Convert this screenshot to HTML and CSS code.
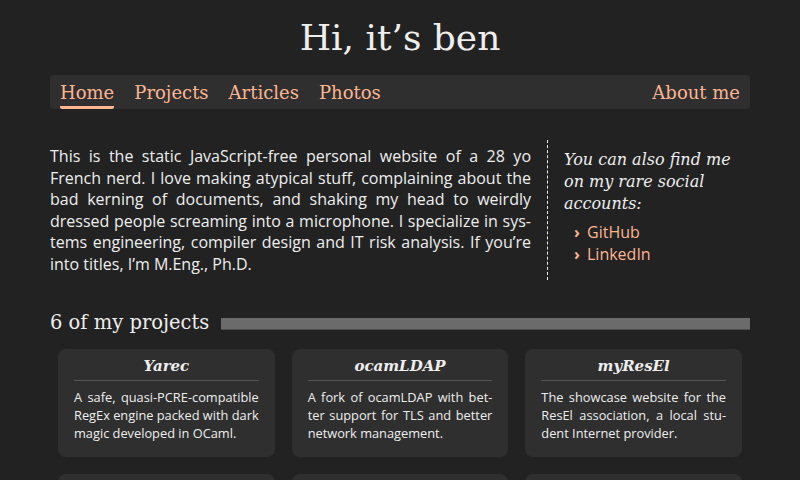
FILE: index.html
```html
<!DOCTYPE html>
<html lang="en">
<head>
  <meta charset="UTF-8">
  <meta name="viewport" content="width=device-width, initial-scale=1.0">
  <title>Hi, it’s ben</title>
  <link rel="stylesheet" href="styles.css">
</head>
<body>
  <div class="page">
    <h1 class="title">Hi, it’s ben</h1>

    <nav class="nav">
      <ul class="nav__list">
        <li><a href="#" class="nav__link nav__link--active">Home</a></li>
        <li><a href="#" class="nav__link">Projects</a></li>
        <li><a href="#" class="nav__link">Articles</a></li>
        <li><a href="#" class="nav__link">Photos</a></li>
      </ul>
      <a href="#" class="nav__link">About me</a>
    </nav>

    <div class="intro">
      <p class="intro__text">This is the static JavaScript-free personal website of a 28&nbsp;yo French nerd. I love making atypical stuff, complaining about the bad kerning of documents, and shaking my head to weirdly dressed people screaming into a microphone. I specialize in sys&shy;tems engineering, compiler design and IT risk analysis. If you’re into titles, I’m M.Eng., Ph.D.</p>
      <aside class="social">
        <p class="social__text">You can also find me on my rare social accounts:</p>
        <ul class="social__list">
          <li><a href="#">GitHub</a></li>
          <li><a href="#">LinkedIn</a></li>
        </ul>
      </aside>
    </div>

    <h2 class="section-title"><span>6 of my projects</span></h2>

    <div class="projects">
      <div class="card">
        <h3 class="card__title">Yarec</h3>
        <p class="card__text">A safe, quasi-PCRE-compatible RegEx engine packed with dark magic developed in OCaml.</p>
      </div>
      <div class="card">
        <h3 class="card__title">ocamLDAP</h3>
        <p class="card__text">A fork of ocamLDAP with bet&shy;ter support for TLS and better network management.</p>
      </div>
      <div class="card">
        <h3 class="card__title">myResEl</h3>
        <p class="card__text">The showcase website for the ResEl association, a local stu&shy;dent Internet provider.</p>
      </div>
      <div class="card">
        <h3 class="card__title">Tadoku</h3>
        <p class="card__text">A small tool to help reading Japanese texts.</p>
      </div>
      <div class="card">
        <h3 class="card__title">Blog</h3>
        <p class="card__text">This very website.</p>
      </div>
      <div class="card">
        <h3 class="card__title">Misc</h3>
        <p class="card__text">Various small things.</p>
      </div>
    </div>
  </div>
</body>
</html>
```

FILE: styles.css
```css
* {
  box-sizing: border-box;
}

body, html {
  margin: 0;
  padding: 0;
}

body {
  background: #222;
  color: #eee;
  font-family: "Open Sans", sans-serif;
}

a {
  color: #fdb592;
  text-decoration: none;
}

.page {
  width: 700px;
  margin: 0 auto;
}

.title {
  margin: 0;
  padding: 14px 0 13px;
  font-family: "DejaVu Serif", serif;
  font-weight: normal;
  font-size: 36px;
  line-height: 48px;
  text-align: center;
  color: #eee;
}

.nav {
  display: flex;
  justify-content: space-between;
  align-items: center;
  height: 34px;
  padding: 0 10px;
  background: #2f2f2f;
  border-radius: 3px;
  font-family: "DejaVu Serif", serif;
  font-size: 18px;
}

.nav__list {
  display: flex;
  gap: 20px;
  margin: 0;
  padding: 0;
  list-style-type: none;
}

.nav__link {
  display: block;
  padding-top: 4px;
  line-height: 27px;
  border-bottom: 3px solid transparent;
}

.nav__link--active {
  border-bottom-color: #fdb592;
  border-radius: 2px;
}

.intro {
  display: flex;
  align-items: flex-start;
  margin-top: 31px;
}

.intro__text {
  flex: 1;
  margin: 6px 0 0;
  font-size: 16px;
  line-height: 21.5px;
  text-align: justify;
  hyphens: auto;
}

.social {
  width: 203px;
  margin-left: 16px;
  padding: 9px 10px 15px 16px;
  border-left: 1px dashed #eee;
}

.social__text {
  margin: 0;
  font-family: "DejaVu Serif", serif;
  font-style: italic;
  font-size: 16px;
  line-height: 22px;
}

.social__list {
  margin: 6px 0 0;
  padding: 0 0 0 10px;
  list-style-type: none;
  font-size: 16px;
  line-height: 22px;
}

.social__list li::before {
  content: "›";
  display: inline-block;
  width: 13px;
  color: #fdb592;
  font-weight: bold;
}

.section-title {
  display: flex;
  align-items: center;
  margin: 29px 0 0;
  font-family: "DejaVu Serif", serif;
  font-weight: normal;
  font-size: 19.5px;
  line-height: 28px;
}

.section-title::after {
  content: "";
  flex: 1;
  height: 11px;
  margin-left: 12px;
  margin-top: 2px;
  background: #6b6b6b;
  border-bottom: 1px solid #4e4e4e;
}

.projects {
  display: grid;
  grid-template-columns: repeat(3, 1fr);
  gap: 17px;
  margin-top: 12px;
  padding: 0 8px;
}

.card {
  padding: 8px 16px 15px;
  background: #2f2f2f;
  border-radius: 8px;
}

.card__title {
  margin: 0;
  padding-bottom: 4px;
  border-bottom: 1px solid #555;
  font-family: "DejaVu Serif", serif;
  font-style: italic;
  font-weight: bold;
  font-size: 15px;
  line-height: 19px;
  text-align: center;
}

.card__text {
  margin: 7px 0 0;
  font-size: 12.8px;
  line-height: 18px;
  text-align: justify;
  hyphens: auto;
}
```
